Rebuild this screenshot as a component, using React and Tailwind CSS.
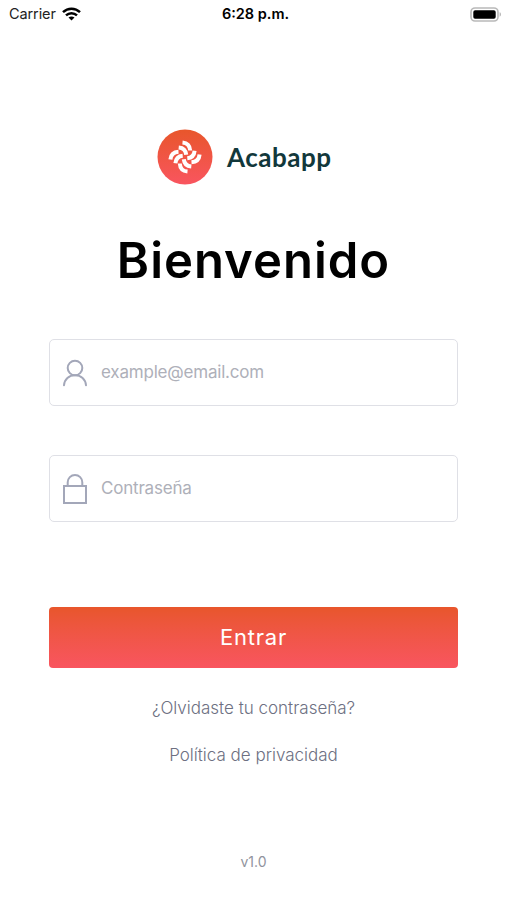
const blades = [0, 90, 180, 270];

function Logo() {
  return (
    <svg className="h-[56px] w-[56px] shrink-0" viewBox="0 0 56 56" fill="none">
      <defs>
        <linearGradient id="logo-fill" x1="0" y1="0" x2="0" y2="1">
          <stop offset="0" stopColor="#e8562b" />
          <stop offset="1" stopColor="#f9555f" />
        </linearGradient>
      </defs>
      <circle cx="28" cy="28" r="27.5" fill="url(#logo-fill)" />
      <g stroke="#fff" strokeWidth="4">
        {blades.map((angle) => (
          <g key={angle} transform={`rotate(${angle} 28 28)`}>
            <path d="M25.5 13.4C30 13.8 32.9 16.6 33.2 21.5" />
            <path d="M21.7 18.4C26 18.8 28.8 21.3 29.2 25.7" />
          </g>
        ))}
      </g>
    </svg>
  );
}

function WifiIcon() {
  return (
    <svg className="h-[14px] w-[19px]" viewBox="0 0 19 14" fill="none">
      <g stroke="#000" strokeWidth="2.5">
        <path d="M1 5.1C5.8.5 13.2.5 18 5.1" />
        <path d="M4 8.3c3.1-2.9 7.9-2.9 11 0" />
      </g>
      <path d="M6.5 10.5c1.7-1.5 4.3-1.5 6 0l-3 3z" fill="#000" />
    </svg>
  );
}

function BatteryIcon() {
  return (
    <svg className="h-[15px] w-[32px]" viewBox="0 0 32 15" fill="none">
      <rect x="1" y="1" width="27" height="13" rx="4" stroke="#b9b9b9" strokeWidth="1.6" />
      <rect x="3.3" y="3.2" width="22.4" height="8.6" rx="1.8" fill="#000" />
      <path d="M29.6 5.3c1.9.5 1.9 3.9 0 4.4z" fill="#b9b9b9" />
    </svg>
  );
}

function UserIcon() {
  return (
    <svg className="h-[32px] w-[26px] shrink-0" viewBox="0 0 26 32" fill="none" stroke="#a3a7b9" strokeWidth="2">
      <circle cx="13" cy="11" r="7.3" />
      <path d="M2 28.3c.4-6.2 5-10.1 11-10.1s10.600 3.900 11 10.100" strokeLinecap="round" />
    </svg>
  );
}

function LockIcon() {
  return (
    <svg className="h-[32px] w-[26px] shrink-0" viewBox="0 0 26 32" fill="none" stroke="#a3a7b9" strokeWidth="2">
      <rect x="2" y="13" width="22" height="17" />
      <path d="M5.700 13V9.300a7.300 7.300 0 0 1 14.600 0V13" />
    </svg>
  );
}

function Field({ icon, type, placeholder, spacing }) {
  return (
    <label className="flex h-[67px] items-center gap-[13px] rounded-[5px] border-[1.5px] border-[#dfe0e6] bg-white px-3">
      {icon}
      <input
        type={type}
        placeholder={placeholder}
        className={`min-w-0 flex-1 bg-transparent text-[17px] outline-none placeholder:text-[#aeb0b9] ${spacing}`}
      />
    </label>
  );
}

export default function App() {
  return (
    <main className="flex h-[900px] w-[507px] flex-col overflow-hidden bg-white font-['Inter',sans-serif]">
      <header className="grid h-7 shrink-0 grid-cols-3 items-center pr-[5px] pl-[9px] text-[14.5px] text-[#222]">
        <div className="flex items-center gap-1.5">
          <span className="tracking-[-0.1px]">Carrier</span>
          <WifiIcon />
        </div>
        <span className="text-center font-semibold text-black">6:28 p.m.</span>
        <div className="flex justify-end">
          <BatteryIcon />
        </div>
      </header>

      <div className="mt-[101px] flex items-center gap-[14px] pl-[157px]">
        <Logo />
        <span className="font-['Lato',sans-serif] text-[26px] leading-none font-bold tracking-[0.5px] text-[#12383b]">
          Acabapp
        </span>
      </div>

      <h1 className="mt-[46px] text-center text-[49px] leading-[60px] font-semibold tracking-[1px] text-black">
        Bienvenido
      </h1>

      <form className="mt-[48px] flex flex-col px-[49px]">
        <Field icon={<UserIcon />} type="email" placeholder="example@email.com" spacing="tracking-[-0.2px]" />
        <div className="mt-[49px] flex flex-col">
          <Field icon={<LockIcon />} type="password" placeholder="Contraseña" spacing="tracking-[-0.2px]" />
        </div>
        <button
          type="button"
          className="mt-[85px] h-[61px] rounded-[4px] bg-linear-to-b from-[#e8562b] to-[#f9555f] text-[22px] tracking-[0.8px] text-white"
        >
          Entrar
        </button>
      </form>

      <nav className="mt-[28px] flex flex-col items-center gap-[22px] text-[17px] leading-[25px] font-light text-[#6d7082]">
        <a href="#">¿Olvidaste tu contraseña?</a>
        <a href="#">Política de privacidad</a>
      </nav>

      <p className="mt-[84px] text-center text-[14px] leading-5 text-[#91939d]">v1.0</p>
    </main>
  );
}
